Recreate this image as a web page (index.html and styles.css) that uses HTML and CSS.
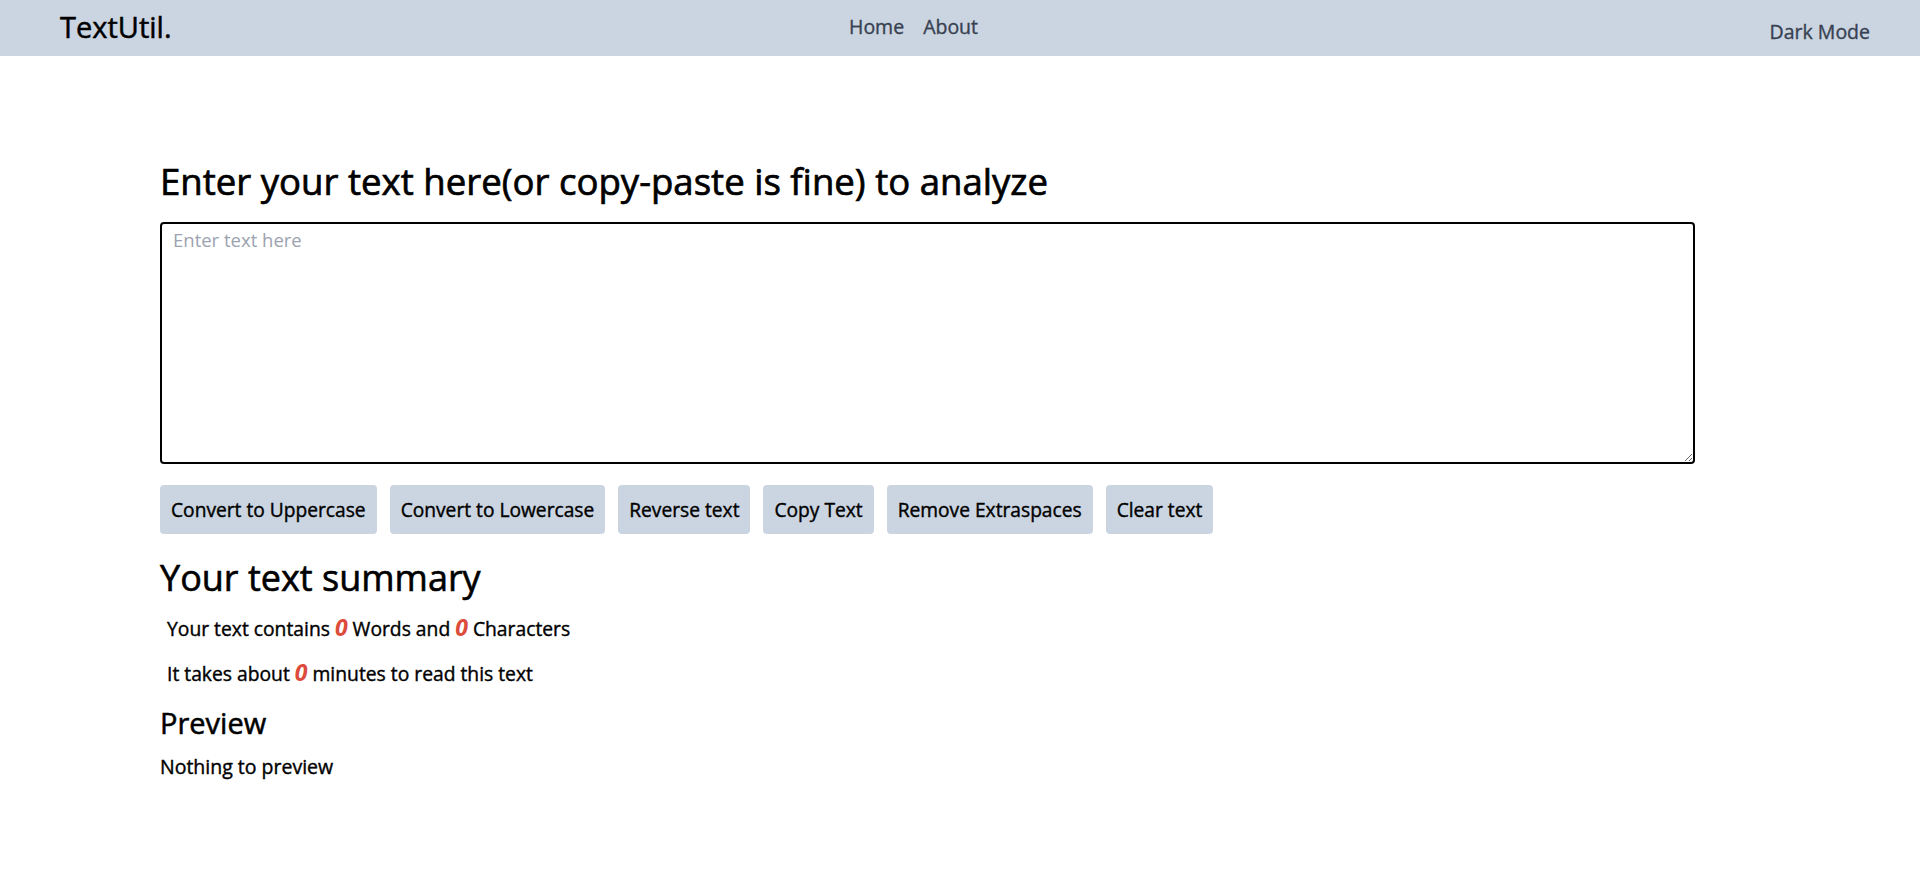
FILE: index.html
```html
<!DOCTYPE html>
<html lang="en">
<head>
<meta charset="utf-8">
<title>TextUtil</title>
<link rel="stylesheet" href="styles.css">
</head>
<body>
<nav class="navbar">
  <a class="brand" href="#">TextUtil.</a>
  <ul class="nav-links">
    <li><a href="#">Home</a></li>
    <li><a href="#">About</a></li>
  </ul>
  <button class="mode-toggle">Dark Mode</button>
</nav>
<main class="container">
  <h1 class="title">Enter your text here(or copy-paste is fine) to analyze</h1>
  <textarea class="text-input" placeholder="Enter text here"></textarea>
  <div class="actions">
    <button class="btn">Convert to Uppercase</button>
    <button class="btn">Convert to Lowercase</button>
    <button class="btn">Reverse text</button>
    <button class="btn">Copy Text</button>
    <button class="btn">Remove Extraspaces</button>
    <button class="btn">Clear text</button>
  </div>
  <h2 class="summary-title">Your text summary</h2>
  <p class="stat">Your text contains <b class="num">0</b> Words and <b class="num">0</b> Characters</p>
  <p class="stat">It takes about <b class="num">0</b> minutes to read this text</p>
  <h3 class="preview-title">Preview</h3>
  <p class="preview">Nothing to preview</p>
</main>
</body>
</html>
```
FILE: styles.css
```css
* { box-sizing: border-box; }
html, body { margin: 0; padding: 0; }
body {
  font-family: "Open Sans", "Noto Sans", sans-serif;
  color: #000;
  background: #fff;
}
.navbar {
  display: flex;
  align-items: flex-start;
  height: 56px;
  background: #cbd5e1;
  padding: 0 50px 0 60px;
}
.brand {
  flex: none;
  width: 110px;
  font-size: 29px;
  line-height: 34px;
  padding-top: 10px;
  color: #000;
  text-decoration: none;
  -webkit-text-stroke: 0.5px #000;
}
.nav-links {
  display: flex;
  gap: 19px;
  list-style: none;
  margin: 0 0 0 679px;
  padding: 14px 0 0;
}
.nav-links a {
  font-size: 19.5px;
  line-height: 26px;
  color: #374151;
  text-decoration: none;
  -webkit-text-stroke: 0.35px #374151;
}
.mode-toggle {
  margin-left: auto;
  margin-top: 19px;
  padding: 0;
  border: 0;
  background: none;
  font-family: inherit;
  font-size: 19.5px;
  line-height: 26px;
  color: #374151;
  -webkit-text-stroke: 0.35px #374151;
}
.container {
  padding: 0 0 0 160px;
}
.title {
  margin: 103px 0 19px;
  font-size: 36.6px;
  line-height: 44px;
  font-weight: 400;
  -webkit-text-stroke: 0.7px #000;
}
.text-input {
  display: block;
  width: 1535px;
  height: 242px;
  border: 2px solid #000;
  border-radius: 4px;
  padding: 4px 11px;
  font-family: inherit;
  font-size: 18.5px;
  line-height: 24px;
  resize: vertical;
  outline: none;
}
.text-input::placeholder { color: #9ca3af; }
.actions {
  display: flex;
  gap: 13px;
  margin-top: 21px;
}
.btn {
  height: 49px;
  padding: 0 11px;
  border: 0;
  border-radius: 4px;
  background: #cbd5e1;
  font-family: inherit;
  font-size: 19.2px;
  color: #000;
  -webkit-text-stroke: 0.4px #000;
}
.summary-title {
  margin: 22px 0 12px;
  font-size: 36px;
  line-height: 44px;
  font-weight: 400;
  -webkit-text-stroke: 0.6px #000;
}
.stat {
  margin: 0 0 13px;
  padding-left: 7px;
  font-size: 19.3px;
  line-height: 30px;
  -webkit-text-stroke: 0.4px #000;
}
.num {
  color: #dc4b3b;
  font-style: italic;
  font-weight: 700;
  font-size: 23px;
  -webkit-text-stroke: 0;
}
.preview-title {
  margin: 16px 0 11px;
  font-size: 29px;
  line-height: 36px;
  font-weight: 400;
  -webkit-text-stroke: 0.55px #000;
}
.preview {
  margin: 0;
  font-size: 19.5px;
  line-height: 30px;
  -webkit-text-stroke: 0.4px #000;
}
```
